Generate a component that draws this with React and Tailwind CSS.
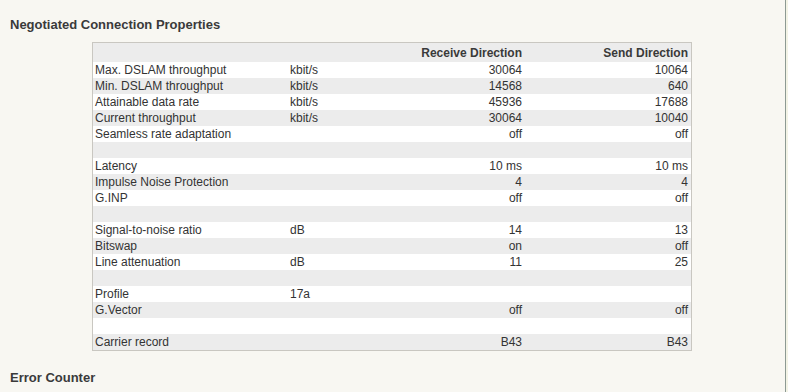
const rows = [
  ['Max. DSLAM throughput', 'kbit/s', '30064', '10064'],
  ['Min. DSLAM throughput', 'kbit/s', '14568', '640'],
  ['Attainable data rate', 'kbit/s', '45936', '17688'],
  ['Current throughput', 'kbit/s', '30064', '10040'],
  ['Seamless rate adaptation', '', 'off', 'off'],
  ['', '', '', ''],
  ['Latency', '', '10 ms', '10 ms'],
  ['Impulse Noise Protection', '', '4', '4'],
  ['G.INP', '', 'off', 'off'],
  ['', '', '', ''],
  ['Signal-to-noise ratio', 'dB', '14', '13'],
  ['Bitswap', '', 'on', 'off'],
  ['Line attenuation', 'dB', '11', '25'],
  ['', '', '', ''],
  ['Profile', '17a', '', ''],
  ['G.Vector', '', 'off', 'off'],
  ['', '', '', ''],
  ['Carrier record', '', 'B43', 'B43'],
]

function App() {
  return (
    <div className="flex h-[392px] w-[788px] overflow-hidden bg-[#f8f7f2] font-['Liberation_Sans',Arial,sans-serif] text-[#333333]">
      <div className="w-[785px] pt-[17px]">
        <h2 className="pl-[10px] text-[13px] font-bold leading-[16px] text-[#3a3a3a]">
          Negotiated Connection Properties
        </h2>
        <div className="ml-[92px] mt-[9px] w-[600px] border border-[#c9c7c1] text-[12px] leading-[16px]">
          <div className="grid h-[19px] grid-cols-[197px_100px_136px_165px] items-center bg-[#ececec] font-bold text-[#3a3a3a]">
            <span></span>
            <span></span>
            <span className="pr-[4px] text-right">Receive Direction</span>
            <span className="pr-[3px] text-right">Send Direction</span>
          </div>
          {rows.map((r, i) => (
            <div
              key={i}
              className={`grid h-[16px] grid-cols-[197px_100px_136px_165px] items-center ${i % 2 === 0 ? 'bg-white' : 'bg-[#ececec]'}`}
            >
              <span className="pl-[2px] whitespace-nowrap">{r[0]}</span>
              <span>{r[1]}</span>
              <span className="pr-[4px] text-right">{r[2]}</span>
              <span className="pr-[3px] text-right">{r[3]}</span>
            </div>
          ))}
        </div>
        <h2 className="mt-[19px] pl-[10px] text-[13px] font-bold leading-[16px] text-[#3a3a3a]">
          Error Counter
        </h2>
      </div>
      <div className="w-[1px] bg-[#8d9a93]"></div>
      <div className="w-[2px] bg-[#f3f3e6]"></div>
    </div>
  )
}

export default App
